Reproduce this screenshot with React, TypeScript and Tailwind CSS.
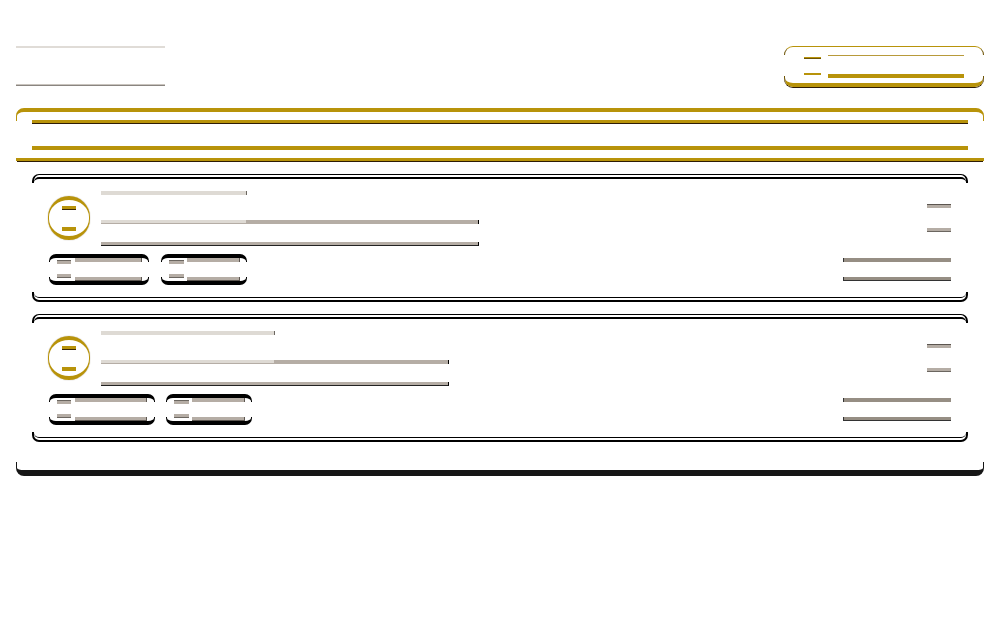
const GOLD = "bg-[#b8930a]";

const orders = [
  {
    titleWidth: "w-[146px]",
    bodyWidth: "w-[378px]",
    splitWidth: "w-[145px]",
    pills: [
      { width: "w-[100px]", dash: "w-[14px]", gap: "gap-[4px]", bar: "w-[67px]" },
      { width: "w-[86px]", dash: "w-[15px]", gap: "gap-[3px]", bar: "w-[53px]" },
    ],
    pillGap: "gap-[12px]",
  },
  {
    titleWidth: "w-[174px]",
    bodyWidth: "w-[348px]",
    splitWidth: "w-[173px]",
    pills: [
      { width: "w-[106px]", dash: "w-[14px]", gap: "gap-[4px]", bar: "w-[72px]" },
      { width: "w-[86px]", dash: "w-[15px]", gap: "gap-[3px]", bar: "w-[53px]" },
    ],
    pillGap: "gap-[11px]",
  },
];

const SideGaps = ({ className }: { className: string }) => (
  <>
    <div className={`absolute left-[-1px] w-px bg-white ${className}`} />
    <div className={`absolute right-[-1px] w-px bg-white ${className}`} />
  </>
);

const Pill = ({ pill }: { pill: (typeof orders)[number]["pills"][number] }) => (
  <div
    className={`relative h-[31px] ${pill.width} rounded-[7px] border-x border-y-4 border-black pl-[7px]`}
  >
    <SideGaps className="top-[4px] bottom-[4px]" />
    <div className={`flex h-[23px] ${pill.gap}`}>
      <div className={`flex flex-col justify-between pt-[2px] pb-[3px] ${pill.dash}`}>
        <div className="h-[4px] border-t border-[#6b6660] bg-[#b5ada5]" />
        <div className="h-[4px] border-b border-[#6b6660] bg-[#b5ada5]" />
      </div>
      <div className={`flex flex-col justify-between ${pill.bar}`}>
        <div className="h-[4px] border-r border-[#5c5650] bg-[#b5ada5]" />
        <div className="h-[4px] border-r border-b border-[#5c5650] bg-[#b5ada5]" />
      </div>
    </div>
  </div>
);

const OrderCard = ({ order }: { order: (typeof orders)[number] }) => (
  <div className="relative rounded-[7px] border-x-2 border-t border-b-2 border-black">
    <div className="absolute top-[8px] bottom-[8px] left-[-2px] w-[2px] bg-white" />
    <div className="absolute top-[8px] right-[-2px] bottom-[8px] w-[2px] bg-white" />
    <div className="my-[2px] rounded-[5px] border-t-2 border-b border-black px-[14px] pt-[12px] pb-[12px]">
      <div className="flex justify-between pr-[1px]">
        <div className="flex">
          <div className="mt-[5px] flex h-[44px] w-[42px] flex-col items-center justify-between rounded-full border-x border-y-4 border-[#b8930a] pt-[6px] pb-[5px] shadow-[0_0_1px_#3a280599]">
            <div className={`h-[4px] w-[14px] border-b border-[#3a2805] ${GOLD}`} />
            <div className={`h-[4px] w-[14px] ${GOLD}`} />
          </div>
          <div className="ml-[11px] flex h-[55px] flex-col justify-between">
            <div className={`h-[4px] border-r border-[#6b6660] bg-[#dedad4] ${order.titleWidth}`} />
            <div className="flex flex-1 flex-col justify-between pt-[25px]">
              <div className={`flex h-[4px] border-r border-black bg-[#b5ada5] ${order.bodyWidth}`}>
                <div className={`h-[3px] bg-[#dedad4] ${order.splitWidth}`} />
              </div>
              <div className={`h-[4px] border-r border-b border-r-black border-b-[#222222] bg-[#b5ada5] ${order.bodyWidth}`} />
            </div>
          </div>
        </div>
        <div className="flex flex-col gap-[20px] pt-[13px]">
          <div className="h-[4px] w-[24px] border-t border-[#5c5650] bg-[#b5ada5]" />
          <div className="h-[4px] w-[24px] border-b border-[#6b6660] bg-[#b5ada5]" />
        </div>
      </div>
      <div className="mt-[8px] flex items-center justify-between pr-[1px] pl-[1px]">
        <div className={`flex ${order.pillGap}`}>
          {order.pills.map((pill, index) => (
            <Pill key={index} pill={pill} />
          ))}
        </div>
        <div className="flex h-[23px] w-[108px] flex-col justify-between">
          <div className="h-[4px] border-l border-[#333333] bg-[#968e84]" />
          <div className="h-[4px] border-b border-l border-[#333333] bg-[#968e84]" />
        </div>
      </div>
    </div>
  </div>
);

export default function App() {
  return (
    <div className="min-h-screen bg-white px-[16px] pt-[46px]">
      <div className="flex items-start justify-between">
        <div className="flex h-[40px] w-[149px] flex-col justify-between">
          <div className="h-[2px] bg-[#e0dcd7]" />
          <div className="h-[2px] border-t border-[#c9c4be] bg-[#8a8580]" />
        </div>
        <div className="relative w-[200px] rounded-[9px] border-x border-t border-b-4 border-[#b8930a] border-x-[#6e5405] shadow-[0_1px_0_#2e1c05]">
          <SideGaps className="top-[8px] bottom-[7px]" />
          <div className="flex h-[36px] gap-[7px] px-[19px]">
            <div className="flex w-[17px] flex-col justify-between pt-[10px] pb-[8px]">
              <div className={`h-[2px] border-b border-[#6e5405] ${GOLD}`} />
              <div className={`h-[2px] ${GOLD}`} />
            </div>
            <div className="flex flex-1 flex-col justify-between pt-[8px] pb-[5px]">
              <div className="h-px bg-[#b89a3a]" />
              <div className={`h-[4px] ${GOLD}`} />
            </div>
          </div>
        </div>
      </div>

      <div className="mt-[21px]">
        <div className="relative rounded-t-[8px] border-x border-t-4 border-b-[3px] border-[#b8930a] px-[15px] pt-[8px] pb-[8px] shadow-[0_1px_0_#2e1c05]">
          <SideGaps className="top-[9px] bottom-0" />
          <div className={`h-[4px] border-b border-[#2e1c05] ${GOLD}`} />
          <div className={`mt-[22px] h-[4px] ${GOLD}`} />
        </div>
        <div className="relative flex flex-col gap-[12px] rounded-b-[8px] border-x border-b-[6px] border-[#161616] px-[15px] pt-[13px] pb-[28px]">
          <SideGaps className="top-0 bottom-[8px]" />
          {orders.map((order, index) => (
            <OrderCard key={index} order={order} />
          ))}
        </div>
      </div>
    </div>
  );
}
